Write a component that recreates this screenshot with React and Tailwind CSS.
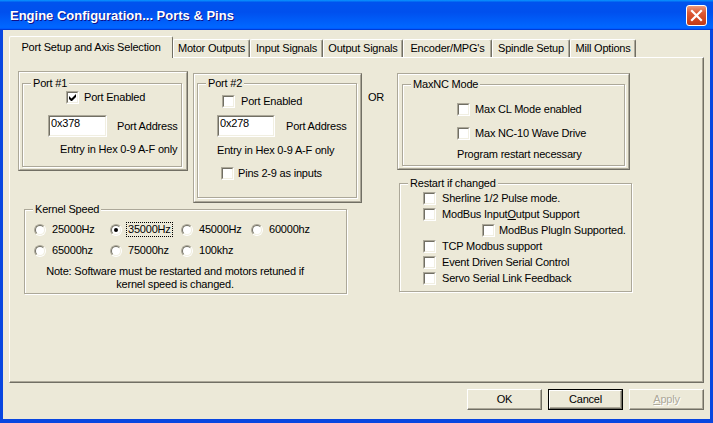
import React from 'react';

const SUNK_OUT = 'border border-t-[#aca899] border-l-[#aca899] border-r-white border-b-white';
const SUNK_IN = 'border border-t-[#716f64] border-l-[#716f64] border-r-[#f1efe2] border-b-[#f1efe2] bg-white';

const tabs = [
  { label: 'Port Setup and Axis Selection', w: 'w-[164px]', active: true },
  { label: 'Motor Outputs', w: 'w-[77px]' },
  { label: 'Input Signals', w: 'w-[73px]' },
  { label: 'Output Signals', w: 'w-[80px]' },
  { label: "Encoder/MPG's", w: 'w-[89px]' },
  { label: 'Spindle Setup', w: 'w-[78px]' },
  { label: 'Mill Options', w: 'w-[66px]' },
];

const speeds = [
  [
    { label: '25000Hz', w: 'w-[76px]' },
    { label: '35000Hz', w: 'w-[71px]', on: true },
    { label: '45000Hz', w: 'w-[70px]' },
    { label: '60000hz' },
  ],
  [
    { label: '65000hz', w: 'w-[76px]' },
    { label: '75000hz', w: 'w-[71px]' },
    { label: '100khz' },
  ],
];

const Check = ({ checked }) => (
  <span className={`flex h-[13px] w-[13px] shrink-0 ${SUNK_OUT}`}>
    <span className={`flex flex-1 items-center justify-center ${SUNK_IN}`}>
      {checked && (
        <svg width="7" height="7" viewBox="0 0 7 7">
          <path d="M0 2 L2.5 4.5 L7 0 L7 3 L2.5 7.5 L0 5 Z" fill="#000" />
        </svg>
      )}
    </span>
  </span>
);

const Radio = ({ checked }) => (
  <span className="flex h-[12px] w-[12px] shrink-0 rounded-full border border-t-[#aca899] border-l-[#aca899] border-r-white border-b-white">
    <span className="flex flex-1 items-center justify-center rounded-full border border-t-[#716f64] border-l-[#716f64] border-r-[#f1efe2] border-b-[#f1efe2] bg-white">
      {checked && <span className="h-[4px] w-[4px] rounded-full bg-black" />}
    </span>
  </span>
);

const TextBox = ({ value, w }) => (
  <span className={`flex h-[22px] shrink-0 ${w} ${SUNK_OUT}`}>
    <span className={`flex-1 pl-[1px] pt-[0px] leading-[13px] ${SUNK_IN}`}>{value}</span>
  </span>
);

// raised outer frame around a group
const Frame = ({ className = '', inner = '', children }) => (
  <div className={`flex border border-t-[#aca899] border-l-[#aca899] border-r-[#716f64] border-b-[#716f64] ${className}`}>
    <div className={`flex flex-1 flex-col border border-t-white border-l-white border-r-[#aca899] border-b-[#aca899] ${inner}`}>
      {children}
    </div>
  </div>
);

// etched group box with caption
const Group = ({ label, className = '', children }) => (
  <div className={`relative flex flex-col border border-[#aca899] shadow-[inset_1px_1px_0_#fff,1px_1px_0_#fff] ${className}`}>
    <span className="absolute left-[8px] top-[-7px] bg-[#ece9d8] px-[2px] leading-[13px]">{label}</span>
    {children}
  </div>
);

const CheckRow = ({ checked, className = '', gap = 'gap-[5px]', children }) => (
  <div className={`flex h-[13px] items-center ${gap} ${className}`}>
    <Check checked={checked} />
    <span className="whitespace-nowrap">{children}</span>
  </div>
);

const Button = ({ children, isDefault, disabled }) => {
  const face = 'flex flex-1 items-center justify-center border border-t-white border-l-white border-r-[#716f64] border-b-[#716f64] shadow-[inset_-1px_-1px_0_#aca899]';
  return (
    <div className={`flex h-[21px] w-[75px] ${isDefault ? 'border border-black' : ''}`}>
      <div className={`${face} ${disabled ? 'text-[#aca899] [text-shadow:1px_1px_0_#fff]' : ''}`}>{children}</div>
    </div>
  );
};

const App = () => {
  return (
    <div className="flex h-[423px] w-[713px] flex-col bg-[#0846e0] font-['Liberation_Sans',Arial,sans-serif] text-[11px] leading-[13px] tracking-[-0.2px] text-black">
      {/* Title bar */}
      <div className="flex h-[30px] shrink-0 items-center bg-[linear-gradient(to_bottom,#0997ff_0%,#0053ee_8%,#0050ee_40%,#0066ff_88%,#0066ff_93%,#005bff_95%,#003dd7_96%,#003dd7_100%)]">
        <span className="pl-[10px] pt-[1px] text-[13px] font-bold tracking-normal text-white [text-shadow:1px_1px_0_#0f1089]">
          Engine Configuration... Ports &amp; Pins
        </span>
        <div className="ml-auto mr-[6px] flex h-[21px] w-[21px] items-center justify-center rounded-[3px] border border-white bg-[linear-gradient(to_bottom,#ec9a7c,#dd5a35_35%,#cf4520_75%,#c03a18)]">
          <svg width="13" height="13" viewBox="0 0 13 13">
            <path d="M2 2 L11 11 M11 2 L2 11" stroke="#fff" strokeWidth="2.2" strokeLinecap="square" />
          </svg>
        </div>
      </div>

      {/* Client area */}
      <div className="mb-[4px] ml-[3px] mr-[3px] flex flex-1 flex-col bg-[#ece9d8]">
        {/* Tabs */}
        <div className="mt-[6px] flex h-[21px] items-end pl-[6px]">
          {tabs.map((t) =>
            t.active ? (
              <div
                key={t.label}
                className={`relative z-10 -mb-px flex h-[22px] items-center justify-center rounded-t-[2px] border-l border-t border-r border-l-white border-t-white border-r-[#716f64] bg-[#ece9d8] pb-[1px] ${t.w}`}
              >
                {t.label}
              </div>
            ) : (
              <div
                key={t.label}
                className={`flex h-[18px] items-center justify-center whitespace-nowrap rounded-t-[2px] border-l border-t border-r border-l-white border-t-white border-r-[#716f64] shadow-[inset_-1px_0_0_#aca899] ${t.w}`}
              >
                {t.label}
              </div>
            )
          )}
        </div>

        {/* Tab page */}
        <div className="ml-[6px] flex h-[326px] w-[695px] border border-t-white border-l-white border-r-[#716f64] border-b-[#716f64] pl-[8px] pt-[13px] shadow-[inset_-1px_-1px_0_#aca899]">
          {/* Left column */}
          <div className="flex flex-col">
            <div className="flex items-start">
              <Frame className="h-[100px] w-[170px]" inner="pl-[2px] pt-[10px] pr-[4px] pb-[2px]">
                <Group label="Port #1" className="flex-1">
                  <CheckRow checked className="ml-[43px] mt-[7px]">Port Enabled</CheckRow>
                  <div className="ml-[25px] mt-[11px] flex items-center">
                    <TextBox value="0x378" w="w-[59px]" />
                    <span className="ml-[10px] whitespace-nowrap">Port Address</span>
                  </div>
                  <div className="ml-[37px] mt-[6px] whitespace-nowrap">Entry in Hex 0-9 A-F only</div>
                </Group>
              </Frame>

              <Frame className="ml-[5px] mt-[2px] h-[130px] w-[169px]" inner="pl-[2px] pt-[8px] pr-[3px] pb-[3px]">
                <Group label="Port #2" className="flex-1">
                  <CheckRow className="ml-[24px] mt-[11px]" gap="gap-[6px]">Port Enabled</CheckRow>
                  <div className="ml-[19px] mt-[7px] flex items-center">
                    <TextBox value="0x278" w="w-[58px]" />
                    <span className="ml-[11px] whitespace-nowrap">Port Address</span>
                  </div>
                  <div className="ml-[19px] mt-[7px] whitespace-nowrap">Entry in Hex 0-9 A-F only</div>
                  <CheckRow className="ml-[23px] mt-[10px]" gap="gap-[4px]">Pins 2-9 as inputs</CheckRow>
                </Group>
              </Frame>
            </div>

            <Group label="Kernel Speed" className="ml-[6px] mt-[6px] h-[85px] w-[323px]">
              <div className="ml-[9px] mt-[13px] flex flex-col gap-[8px]">
                {speeds.map((row, i) => (
                  <div key={i} className="flex h-[13px] items-center">
                    {row.map((s) => (
                      <div key={s.label} className={`flex items-center ${s.on ? 'gap-[4px]' : 'gap-[6px]'} ${s.w || ''}`}>
                        <Radio checked={s.on} />
                        {s.on ? (
                          <span className="border border-dotted border-black px-[1px] leading-[13px]">{s.label}</span>
                        ) : (
                          <span>{s.label}</span>
                        )}
                      </div>
                    ))}
                  </div>
                ))}
              </div>
              <div className="mt-[8px] w-[300px] text-center">
                Note: Software must be restarted and motors retuned if
                <br />
                kernel speed is changed.
              </div>
            </Group>
          </div>

          {/* OR */}
          <div className="ml-[6px] mt-[20px] w-[29px]">OR</div>

          {/* Right column */}
          <div className="flex flex-col">
            <Frame className="mt-[2px] h-[97px] w-[233px]" inner="pl-[3px] pt-[9px] pr-[3px] pb-[2px]">
              <Group label="MaxNC Mode" className="flex-1">
                <CheckRow className="ml-[54px] mt-[18px]">Max CL Mode enabled</CheckRow>
                <CheckRow className="ml-[54px] mt-[11px]">Max NC-10 Wave Drive</CheckRow>
                <div className="ml-[54px] mt-[8px] whitespace-nowrap">Program restart necessary</div>
              </Group>
            </Frame>

            <Group label="Restart if changed" className="ml-[2px] mt-[13px] h-[109px] w-[233px]">
              <div className="mt-[8px] flex flex-col gap-[3px]">
                <CheckRow className="ml-[23px]" gap="gap-[6px]">Sherline 1/2 Pulse mode.</CheckRow>
                <CheckRow className="ml-[23px]" gap="gap-[6px]">
                  ModBus Input<span className="underline">O</span>utput Support
                </CheckRow>
                <CheckRow className="ml-[82px]" gap="gap-[4px]">ModBus PlugIn Supported.</CheckRow>
                <CheckRow className="ml-[23px]" gap="gap-[6px]">TCP Modbus support</CheckRow>
                <CheckRow className="ml-[23px]" gap="gap-[6px]">Event Driven Serial Control</CheckRow>
                <CheckRow className="ml-[23px]" gap="gap-[6px]">Servo Serial Link Feedback</CheckRow>
              </div>
            </Group>
          </div>
        </div>

        {/* Dialog buttons */}
        <div className="mt-[6px] flex justify-end gap-[6px] pr-[6px]">
          <Button>OK</Button>
          <Button isDefault>Cancel</Button>
          <Button disabled>
            <span className="underline">A</span>pply
          </Button>
        </div>
      </div>
    </div>
  );
};

export default App;
